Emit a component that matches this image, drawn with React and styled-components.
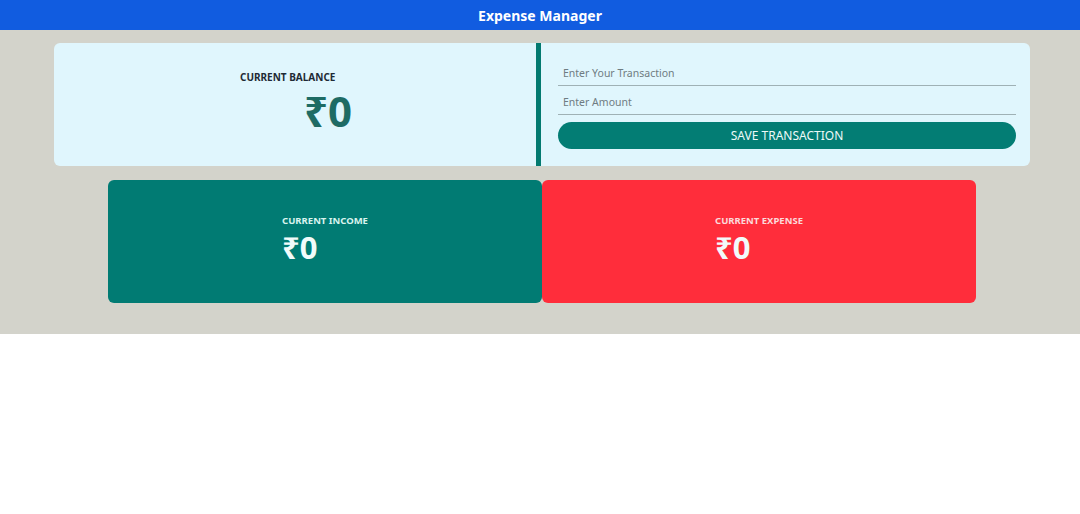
import React, { useState } from 'react'
import styled, { createGlobalStyle } from 'styled-components'

const GlobalStyle = createGlobalStyle`
    body{
        margin:0;
        background:#fff;
        font-family:"Noto Sans", "DejaVu Sans", sans-serif;
    }
    *{ box-sizing:border-box; }
`;

const App = () => {
    const [text, setText] = useState('');
    const [amount, setAmount] = useState('');
    return (
        <>
            <GlobalStyle />
            <Header>Expense Manager</Header>
            <Main>
                <TopCard>
                    <Balance>
                        <Label>CURRENT BALANCE</Label>
                        <BigAmount>₹0</BigAmount>
                    </Balance>
                    <Divider />
                    <Form onSubmit={(e) => e.preventDefault()}>
                        <Input placeholder="Enter Your Transaction" value={text} onChange={(e) => setText(e.target.value)} />
                        <Input placeholder="Enter Amount" value={amount} onChange={(e) => setAmount(e.target.value)} />
                        <SaveButton type="submit">SAVE TRANSACTION</SaveButton>
                    </Form>
                </TopCard>
                <Cards>
                    <StatCard bg="#017b73">
                        <div>
                            <StatLabel color="#d9f3ee">CURRENT INCOME</StatLabel>
                            <StatAmount>₹0</StatAmount>
                        </div>
                    </StatCard>
                    <StatCard bg="#ff2d3b">
                        <div>
                            <StatLabel color="#fbdada">CURRENT EXPENSE</StatLabel>
                            <StatAmount>₹0</StatAmount>
                        </div>
                    </StatCard>
                </Cards>
            </Main>
        </>
    )
}

export default App

const Header = styled.header`
    height:30px;
    background:#115ce0;
    color:#fff;
    font-weight:700;
    font-size:14px;
    display:flex;
    align-items:center;
    justify-content:center;
    box-shadow:0 1px 0 #8fb3f0;
`;
const Main = styled.main`
    background:#d3d3cb;
    padding:13px 50px 31px 54px;
`;
const TopCard = styled.section`
    height:123px;
    background:#e0f6fd;
    border-radius:6px;
    display:flex;
    overflow:hidden;
`;
const Balance = styled.div`
    width:482px;
    padding:27px 0 0 186px;
`;
const Label = styled.div`
    font-size:10px;
    font-weight:700;
    color:#1e2a35;
`;
const BigAmount = styled.div`
    margin:3px 0 0 64px;
    font-size:42px;
    font-weight:700;
    color:#1e6b64;
    line-height:48px;
`;
const Divider = styled.div`
    width:5px;
    background:#037a70;
`;
const Form = styled.form`
    flex:1;
    padding:14px 14px 0 17px;
    display:flex;
    flex-direction:column;
`;
const Input = styled.input`
    height:29px;
    border:none;
    border-bottom:1px solid #9fb1b5;
    background:none;
    padding:4px 5px 0;
    font-family:inherit;
    font-size:10.5px;
    color:#333;
    outline:none;
    &::placeholder{ color:#6f7c82; }
`;
const SaveButton = styled.button`
    margin-top:7px;
    height:27px;
    border:none;
    border-radius:14px;
    background:#037d74;
    color:#eefaf8;
    font-family:inherit;
    font-size:12px;
    cursor:pointer;
`;
const Cards = styled.div`
    margin:14px 54px 0;
    display:grid;
    grid-template-columns:1fr 1fr;
`;
const StatCard = styled.div`
    height:123px;
    border-radius:6px;
    background:${p => p.bg};
    display:flex;
    justify-content:center;
    padding-top:34px;
`;
const StatLabel = styled.div`
    font-size:9.5px;
    font-weight:700;
    color:${p => p.color};
`;
const StatAmount = styled.div`
    font-size:31px;
    font-weight:700;
    color:#f2fbfa;
    line-height:36px;
    margin-top:2px;
`;
